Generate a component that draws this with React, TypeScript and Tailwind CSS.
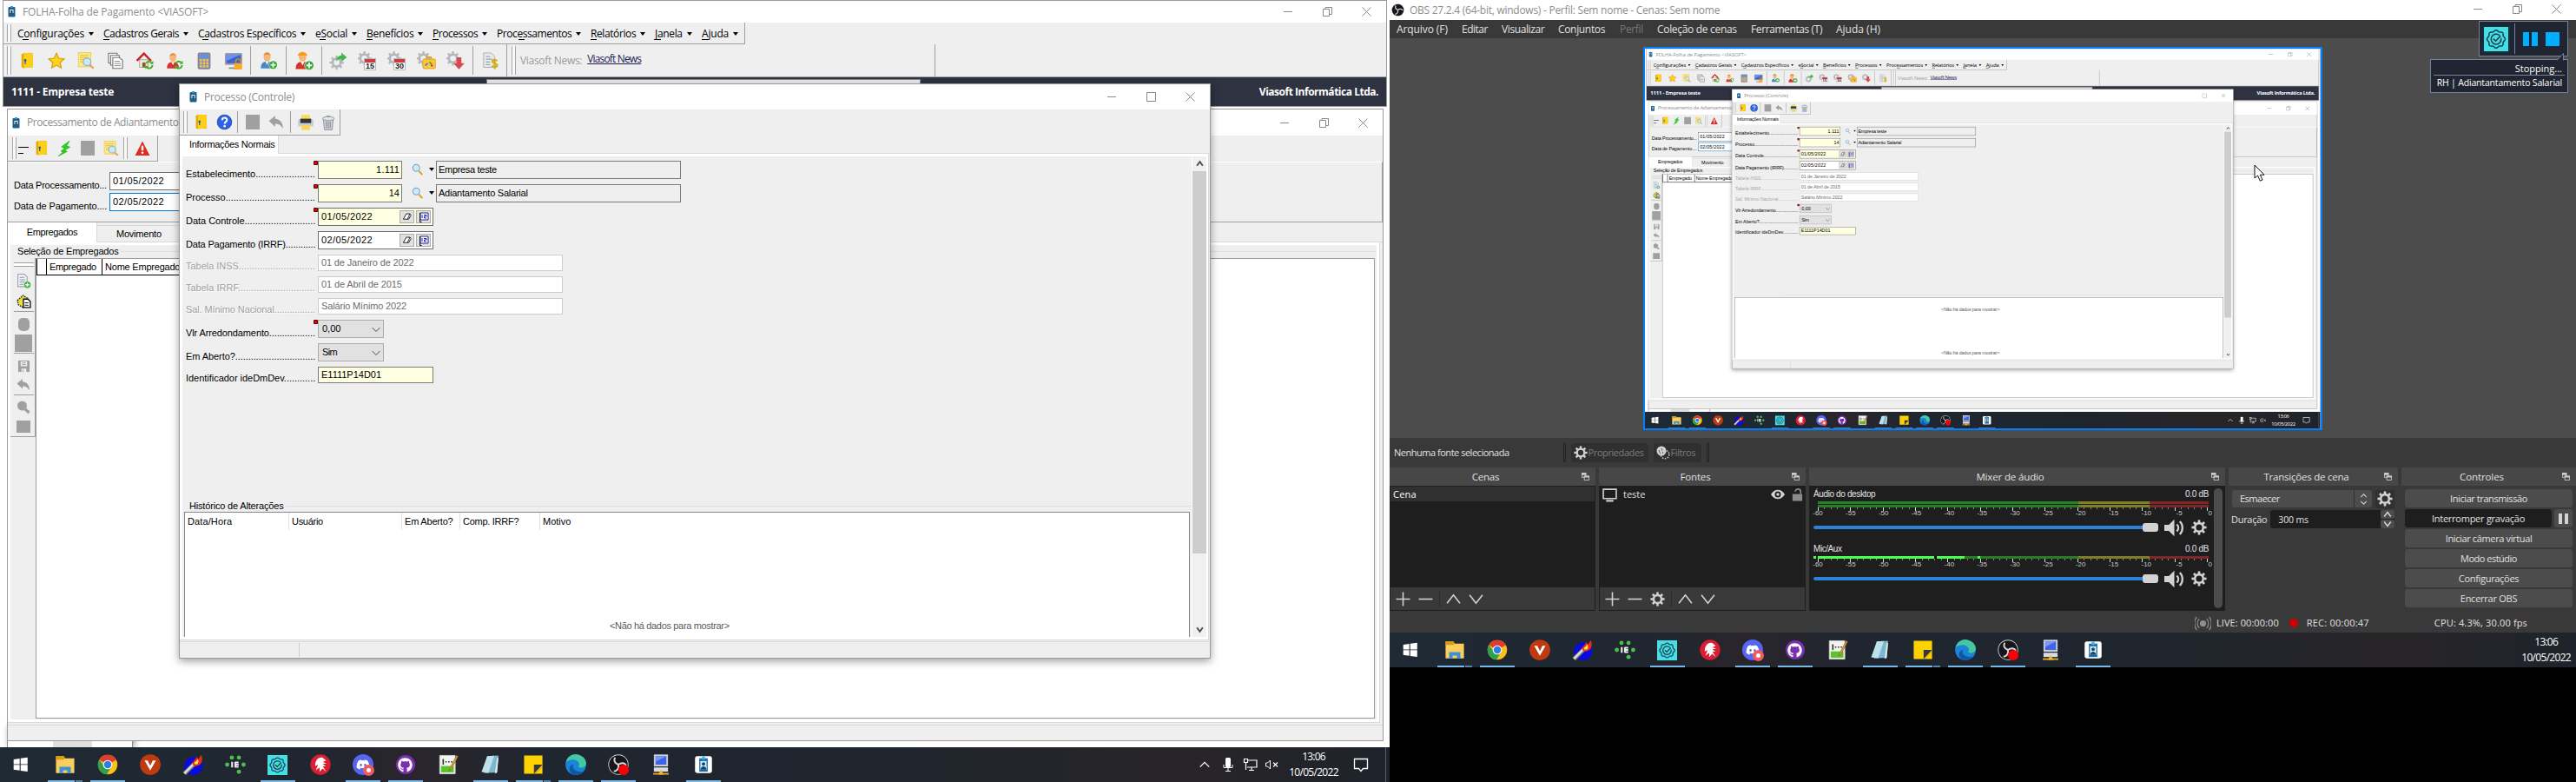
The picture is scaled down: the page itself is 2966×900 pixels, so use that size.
import React, { useLayoutEffect, useRef, useState } from "react";
import { FaDiscord, FaGithub } from "react-icons/fa";

type Kids = { children?: React.ReactNode };

/* Text whose tracking is tuned so that it spans exactly `w` pixels. */
function Fit({ w, children, className = "" }: { w: number; children: string; className?: string }) {
  const ref = useRef<HTMLSpanElement>(null);
  const [ls, setLs] = useState(0);
  useLayoutEffect(() => {
    const el = ref.current;
    if (el) setLs((w - el.offsetWidth) / children.length);
  }, []);
  return (
    <span ref={ref} className={`inline-block shrink-0 whitespace-pre ${className}`} style={{ letterSpacing: `${ls}px` }}>
      {children}
    </span>
  );
}

const MS = "font-['Liberation_Sans',Arial,sans-serif] text-[11px] leading-[13px]";
const UI = "font-['Open_Sans','Noto_Sans',sans-serif] text-[12px] leading-[14px]";

/* ---------- small drawings ---------- */
const Svg = ({ s = 16, v = 16, children, className = "" }: Kids & { s?: number; v?: number; className?: string }) => (
  <svg width={s} height={s} viewBox={`0 0 ${v} ${v}`} className={`block shrink-0 ${className}`} fill="none">{children}</svg>
);
const AppIcon = () => (
  <svg width="9" height="13" viewBox="0 0 9 13" className="block shrink-0">
    <rect x=".5" y="1" width="8" height="11.5" rx="1" fill="#1b5f8f" />
    <rect x="2.500" y="4" width="4" height="4" fill="#fff" />
    <rect x="3.500" y="5" width="2" height="3" fill="#16324a" />
    <rect x="3" y="0" width="3" height="2" fill="#2e9ad6" />
  </svg>
);
const Door = ({ s = 20 }) => (
  <Svg s={s}><path d="M3 2.2 5 1h8.500v13H5z" fill="#d9a300" /><path d="M5 1h8.500v12.500L5 15z" fill="#fdd017" /><path d="M3 2.200 5 1v14l-2-1.200z" fill="#e3ac05" /><circle cx="6.500" cy="7.500" r="1.100" fill="#2457b5" /><path d="M6.500 8v3" stroke="#2457b5" /></Svg>
);
const Star = () => (
  <Svg s={20}><path d="m8 1 2.100 4.600 5 .6-3.700 3.400 1 4.900L8 12.100l-4.400 2.400 1-4.900L.9 6.200l5-.6z" fill="#ffd21c" stroke="#d99a06" strokeWidth=".9" /></Svg>
);
const DocMag = ({ s = 20 }) => (
  <Svg s={s}><rect x="1" y=".5" width="11.500" height="13" fill="#fbe98d" stroke="#e8cc4c" strokeWidth=".7" /><path d="M2.500 3h8M2.500 5h8M2.500 7h5M2.500 9h4" stroke="#e2bf3f" strokeWidth=".8" /><circle cx="9" cy="9" r="3.500" fill="#cbe8f7" stroke="#8fb4c9" /><path d="m11.500 11.700 3.500 3.300" stroke="#e3a857" strokeWidth="1.800" /></Svg>
);
const Docs = () => (
  <Svg s={20}><g fill="#fff" stroke="#777" strokeWidth=".9"><path d="M1.500 1h8v9h-8z" /><path d="M3.500 3h8v9h-8z" /><path d="M5.500 5h6l3 2.500V15h-9z" /></g><path d="M7 8.500h5M7 10.500h6M7 12.500h6" stroke="#888" strokeWidth=".8" /></Svg>
);
const Sync = () => <g><path d="M9 10.500a3 3 0 0 1 5.200-.6M14.800 12a3 3 0 0 1-5.300 1.800" stroke="#45b02f" strokeWidth="1.600" /><path d="M15.600 7.800v3.200h-3zM8.300 15.800v-3.200h3z" fill="#45b02f" /></g>;
const House = () => (
  <Svg s={20}><path d="M3 7h8v7H3z" fill="#efe9df" stroke="#a89a86" strokeWidth=".7" /><path d="M.5 8 7 1.300 13.500 8" stroke="#c4242b" strokeWidth="2" /><path d="M5.500 9.500h3V14h-3z" fill="#8a5a2a" /><Sync /></Svg>
);
const Plus = () => <g><circle cx="11.800" cy="12" r="3.700" fill="#35a936" stroke="#fff" strokeWidth=".4" /><path d="M11.800 9.800v4.400M9.600 12H14" stroke="#fff" strokeWidth="1.300" /></g>;
const Person = ({ c, helmet, s = 20, children }: Kids & { c: string; helmet?: boolean; s?: number }) => (
  <Svg s={s}><path d="M1 15c0-4.500 2-6 5.500-6S12 10.500 12 15z" fill={c} /><path d="m5 9 1.500 3L8 9z" fill="#fff" /><ellipse cx="6.500" cy="5" rx="3.100" ry="4" fill="#f6b877" />{helmet ? <path d="M2.600 4.200C3 .5 10 .5 10.400 4.200z" fill="#f2a01c" /> : <path d="M3.400 4C4 0 9 0 9.600 4 8 2.500 5 2.500 3.400 4" fill="#e08a3c" />}{children}</Svg>
);
const Calc = () => (
  <Svg s={20}><rect x="2.500" y=".8" width="11" height="14.500" rx="1" fill="#8b94a3" stroke="#667" strokeWidth=".6" /><rect x="4" y="2.300" width="8" height="3" fill="#5b8fe8" /><g fill="#f8c25c">{[4, 7, 10].map(x => [6.500, 9.300, 12.100].map(y => <rect key={`${x}${y}`} x={x} y={y} width="2" height="1.900" />))}</g></Svg>
);
const Monitor = () => (
  <Svg s={22}><rect x=".7" y="1.500" width="14.500" height="10" rx="1" fill="#9a9fa8" /><rect x="2" y="2.800" width="12" height="7.200" fill="#3a62dd" /><path d="M2 2.800h12L2 8z" fill="#6e92f0" /><path d="M4 13.500h7v1.200H4z" fill="#888" /><rect x="8.500" y="10" width="6.500" height="5.300" fill="#f5ab25" /><path d="M9.800 10V8.500a2 2 0 0 1 4 0V10" stroke="#d28b10" strokeWidth="1.100" /></Svg>
);
const GearShape = ({ cx = 8, cy = 8, r = 4, c = "#d2d2d2", w = 2.400, t = 2 }) => (
  <g><circle cx={cx} cy={cy} r={r} stroke={c} strokeWidth={w} />{[0, 45, 90, 135, 180, 225, 270, 315].map(a => <rect key={a} x={cx - t / 2} y={cy - r - w / 2 - t * 0.9} width={t} height={t * 1.3} fill={c} transform={`rotate(${a} ${cx} ${cy})`} />)}</g>
);
const GearTool = ({ k }: { k: string }) => (
  <Svg s={22}>
    <GearShape cx={k === "arrow" ? 7 : 5.500} cy={k === "arrow" ? 9.500 : 6} r={3.400} c="#b3b7bd" w={2} t={1.700} />
    {k === "arrow" && <path d="M6.500 8.500C7 4.500 9.500 3.500 11 3.500V1l4.500 4L11 8.700V6.300c-2 0-3.500.7-4.500 2.200" fill="#43b649" />}
    {k === "bag" && <g><rect x="5" y="6.500" width="10.500" height="8" rx="1" fill="#fbc63a" stroke="#e09a1d" strokeWidth=".6" /><path d="M8 6.300V4.800h4v1.500" stroke="#e09a1d" /><path d="m7 12 2-2" stroke="#2f6fe0" strokeWidth="1.200" /><path d="m10.500 9 2 2" stroke="#39a83b" strokeWidth="1.200" /><circle cx="12.500" cy="12" r=".9" fill="#d33" /></g>}
    {k === "down" && <path d="M8.500 5h4v5h2.700l-4.700 5-4.700-5h2.700z" fill="#d9474f" />}
  </Svg>
);
const GearDay = ({ d }: { d: string }) => (
  <span className="relative block h-[22px] w-[22px]">
    <GearTool k="cal" />
    <span className="absolute left-[7px] top-[8px] flex h-[14px] w-[14px] flex-col border border-[#b9b9b9] bg-white">
      <span className="h-[4px] shrink-0 bg-[#cf3a3e]" />
      <span className="text-center font-['Liberation_Sans',sans-serif] text-[9px] font-bold leading-[9px] text-[#222]">{d}</span>
    </span>
  </span>
);
const Invoice = () => (
  <Svg s={20}><path d="M1.500.8h7l3 3V14h-10z" fill="#e8eaee" stroke="#a8adb5" strokeWidth=".8" /><path d="M3.500 4h4M3.500 6.500h6M3.500 9h4M3.500 11.500h4" stroke="#9aa" /><path d="M14 8.200c-1-1.400-4.600-1.300-4.500.6.100 1.700 4.700 1.300 4.600 3.300-.1 1.800-3.800 2-5 .4M11.700 6v9.500" stroke="#d2ac10" strokeWidth="1.600" /></Svg>
);
const Help = () => <Svg s={19}><circle cx="8" cy="8" r="7" fill="#2b62e6" stroke="#1b3fa5" strokeWidth=".7" /><path d="M5.700 6.200C5.800 3 10.600 3.200 10.400 6c-.1 1.700-2.300 1.700-2.300 3.600" stroke="#fff" strokeWidth="1.700" /><circle cx="8.100" cy="11.900" r="1.100" fill="#fff" /></Svg>;
const Undo = () => <Svg s={18}><path d="M.5 6.500 7 1v3.300c5 .4 8 4.200 8 10-2-3.200-4-4.800-8-4.900v3.100z" fill="#a0a0a0" /></Svg>;
const Printer = () => <Svg s={20}><path d="M4 1h8v5H4z" fill="#f6dc5b" /><rect x="1" y="5" width="14" height="6.500" rx="1" fill="#c9ccd0" /><rect x="3" y="4.500" width="10" height="4" fill="#33383d" /><path d="M4 10.500h8V15H4z" fill="#f3d85b" /></Svg>;
const Trash = () => <Svg s={18}><path d="M3 5h10l-1 10.500H4z" fill="#cfd3d8" stroke="#8b9096" strokeWidth=".8" /><ellipse cx="8" cy="4" rx="6" ry="2" fill="#e2e5e8" stroke="#8b9096" strokeWidth=".8" /><path d="M6 1.700h4M6 7v7M8 7v7M10 7v7" stroke="#8b9096" /></Svg>;
const Bolt = () => <Svg s={18}><path d="M13.500 0 5 6.200l3.300 1.500-3.800 3 2 .8L1.500 16l9.500-5-2.600-1.200L14 6.500 10.500 5.200z" fill="#28d11c" stroke="#159b10" strokeWidth=".4" /></Svg>;
const Alert = () => <Svg s={18}><path d="M8 .5 15.500 15H.5z" fill="#df2b20" /><path d="M8 5v5" stroke="#fff" strokeWidth="2.200" /><circle cx="8" cy="12.300" r="1.200" fill="#fff" /></Svg>;
const Mag = () => <Svg s={14}><circle cx="6" cy="6" r="4.500" fill="#cdeafb" stroke="#7fa9c9" strokeWidth="1.300" /><path d="m9.500 10 4.500 5" stroke="#e0a020" strokeWidth="2.300" /></Svg>;
const Tri = () => <svg width="6" height="4" viewBox="0 0 6 4" className="block shrink-0"><path d="M0 0h6L3 4z" fill="#000" /></svg>;
const Erase = () => <Svg s={11}><path d="m2 12 5-9h6l-4 9zM9 12h2l4-7-2-2" fill="#fff" stroke="#111" strokeWidth="1.300" /></Svg>;
const Cal = () => <Svg s={12} v={12}><path d="M2 1h9v8H2z" fill="#fff" stroke="#22228c" /><path d="M1.500 1v10.500h2" stroke="#111" /><path d="M4 3v4M6 3.500h3v1.500H6.500V7H9" stroke="#22c" /></Svg>;

const ObsGear = ({ s = 16 }) => <Svg s={s}><GearShape r={4.300} c="#d2d2d2" w={2.300} t={2.400} /></Svg>;
const ObsLogo = ({ s = 16 }) => (
  <Svg s={s}><circle cx="8" cy="8" r="7.800" fill="#cfcfcf" /><circle cx="8" cy="8" r="7.200" fill="#15151a" /><g stroke="#d8d8d8" strokeWidth="1.300"><path d="M8 8C4.800 7 4.300 4.500 5.500 2.500M8 8c2.600-2 5-1.300 6 .6M8 8c.5 3.200-1.200 5-3.500 5.200" /></g></Svg>
);
const Badge = ({ s = 22 }) => (
  <Svg s={s} v={24}><rect width="24" height="24" fill="#46dfe6" /><g stroke="#17404f" strokeWidth="1.300"><path d="M12 3.200c1.600 0 1.700 1.300 3 1.800s2.400-.4 3.400.6.200 2.200.7 3.400 1.900 1.400 1.900 3-1.400 1.700-1.900 3 .3 2.400-.7 3.400-2.100.1-3.400.6-1.400 1.800-3 1.800-1.700-1.300-3-1.800-2.400.4-3.400-.6-.2-2.200-.7-3.400S3 13.600 3 12s1.400-1.700 1.900-3-.3-2.400.7-3.400 2.100-.1 3.400-.6 1.400-1.800 3-1.800z" /><path d="M15.500 8.500a5 5 0 1 0 1.400 2.500M9.300 11.700l2.300 2.200 4.800-5" /></g></Svg>
);

/* ---------- taskbar ---------- */
const W = 26;
const taskIcons: { el: React.ReactNode; on?: boolean; multi?: boolean }[] = [
  { el: <Svg s={22}><path d="M.5 2.600 7 1.700v6H.5zM8 1.600 15.500.5v7.200H8zM.5 8.600H7v6l-6.500-.9zM8 8.600h7.500v7.100L8 14.700z" fill="#fff" transform="scale(.78) translate(2 2)" /></Svg> },
  { el: <Svg s={W}><path d="M1.500 2H7l1 1.500h6.500V14h-13z" fill="#f8cf5d" /><path d="M1.500 2H7l1 1.500-1 1H1.500z" fill="#d99a18" /><path d="M4 14V9.500h8V14h-2.500v-2h-3v2z" fill="#3a91d8" /></Svg>, on: true, multi: true },
  { el: <Svg s={W}><circle cx="8" cy="8" r="6.900" fill="#fbc117" /><path d="M8 8 2 4.600A6.900 6.900 0 0 1 14 4.600z" fill="#e23c2e" /><path d="M2 4.600A6.900 6.900 0 0 0 7.400 14.900L10 10.500 6 9.500z" fill="#2da14b" /><circle cx="8" cy="8" r="3.300" fill="#fff" /><circle cx="8" cy="8" r="2.600" fill="#2f7de1" /></Svg>, on: true },
  { el: <Svg s={W}><circle cx="8" cy="8" r="7.300" fill="#c03a10" /><path d="m4 5 4 7.200L12 5H9.800L8 8.700 6.200 5z" fill="#fff" /></Svg> },
  { el: <Svg s={W}><circle cx="8.500" cy="9" r="6.500" fill="#0a0adf" /><path d="m2 14.500 7-7" stroke="#777" strokeWidth="3" /><path d="m2 14.200 7-7" stroke="#ddd" strokeWidth="1.600" /><path d="M8 8c-1-2 2-3 2.500-5.500L12 4l2-3c1 3 1 6-2 7.500-2 .8-3 .7-4-.5" fill="#ef2a16" /><path d="M9 7.500c0-1.500 2-2 2.500-3.500.8 1.500.7 3-.5 3.800z" fill="#ffe73a" /></Svg> },
  { el: <Svg s={W}><g fill="#49c24b"><circle cx="5.500" cy="3" r="1.500" /><circle cx="10.500" cy="3" r="1.500" /><circle cx="2.200" cy="8" r="1.500" /><circle cx="13.800" cy="8" r="1.500" /><circle cx="10.500" cy="13" r="1.500" /></g><path d="M5.700 6v4M8 6v4M8 6.500h2.300M8 8h2.300M8 9.500h2.300" stroke="#e8e8e8" strokeWidth="1.300" /></Svg> },
  { el: <Badge s={23} />, on: true },
  { el: <Svg s={W}><circle cx="8" cy="8" r="7.200" fill="#d81f33" /><path d="M9.500 3C6 2.500 4 5.500 4.300 9l2-1-1.600 4 2.800-2-.2 3 2.200-2.300L12 13 9.600 9l2.300.3L9.500 7.500l2.800-.3-2.600-1L12 5z" fill="#fff" /></Svg> },
  { el: <span className="relative flex h-[24px] w-[24px] items-center justify-center rounded-full bg-[#5865f2] text-[16px] text-white"><FaDiscord /><span className="absolute -right-[1px] -bottom-[1px] flex h-[13px] w-[13px] items-center justify-center rounded-full bg-[#ef5a5f]"><span className="h-[5px] w-[5px] rounded-full bg-white" /></span></span>, on: true },
  { el: <span className="flex h-[22px] w-[22px] items-center justify-center rounded-full bg-[#7a2fb0] text-[17px] text-white"><FaGithub /></span>, on: true },
  { el: <Svg s={W}><path d="M2 1.500h11v13H2z" fill="#f4f4ee" stroke="#ccc" strokeWidth=".5" /><path d="M3 9h9v4.500H3z" fill="#57c42e" /><path d="M4.500 4v4M6 6h1M8 6h1M10 6h1" stroke="#333" /><path d="m9 11 5-9.500 1 .6L10 11.500l-1.300.8z" fill="#e3a33a" stroke="#7a5a20" strokeWidth=".4" /></Svg> },
  { el: <Svg s={W}><path d="m5.500 2 8-.5-1 12-9 .5z" fill="#79b8cf" /><path d="m5.500 2 5-.3-4 12.100-5-.6z" fill="#bfe1ec" /><path d="m12.500 3 1 .2-1 10.500-1.500.6z" fill="#e8e8e8" /></Svg>, on: true },
  { el: <Svg s={W}><path d="M1.500 1.500h13V9l-5 5.500h-8z" fill="#fed100" /><path d="M8.500 14.500V8h6z" fill="#343741" /><path d="M9.500 14.500h5V9z" fill="#fed100" /></Svg>, on: true, multi: true },
  { el: <Svg s={W}><circle cx="8" cy="8" r="7.300" fill="#1a84d6" /><path d="M1 6.500C2 2 6-.2 10 1c4 1.100 5.800 4.500 5.200 7-.6 2.200-4 2.700-5.300 1.500C11.500 7 9 4.500 6 4.500c-2.300 0-4 .8-5 2" fill="#43c8a0" /><path d="M6.200 8C5 11 8 13.800 13.300 12.800A7.300 7.300 0 0 1 6 15C2.500 13 2.700 8.500 6.200 8" fill="#0f57a5" /></Svg>, on: true },
  { el: <span className="relative block"><ObsLogo s={24} /><span className="absolute right-0 bottom-0 h-[12px] w-[12px] rounded-full bg-[#fb0007]" /></span>, on: true },
  { el: <Svg s={W}><rect x="3" y=".8" width="10" height="8.500" fill="#c9cdd6" /><rect x="4.200" y="2" width="7.600" height="6" fill="#3f63e8" /><path d="M4.200 2h7.600l-7.600 4z" fill="#7b96f5" /><rect x="3" y="10" width="10" height="3" fill="#d9dbe0" /><path d="M2.500 14.500h11" stroke="#e3a62a" strokeWidth="1.200" /><path d="m8 11.500 2 3.500H6z" fill="#f5b52b" /></Svg> },
  { el: <Svg s={W}><rect x="2" y="2" width="12" height="12" rx="1.500" fill="#fff" /><rect x="5" y="3.500" width="6" height="9.500" fill="#1b6ea8" /><rect x="7" y="2.200" width="2" height="2.300" fill="#3eb1e8" /><rect x="5.800" y="5.500" width="4.400" height="6" fill="#d8eef8" /><circle cx="8" cy="7.500" r="1.200" fill="#14486e" /><path d="M6 11.500c0-3 4-3 4 0z" fill="#14486e" /></Svg>, on: true },
];

const Clock = () => (
  <div className={`flex flex-col items-center text-white ${UI}`}>
    <span className="flex h-[18px] items-center"><Fit w={27}>13:06</Fit></span>
    <span className="flex h-[18px] items-center"><Fit w={57}>10/05/2022</Fit></span>
  </div>
);

function Taskbar({ tray }: { tray: boolean }) {
  return (
    <div className="flex h-[40px] shrink-0 items-stretch bg-[linear-gradient(90deg,#1f2a34_0%,#20262f_22%,#2a252c_30%,#1f2630_40%,#1f252d_65%,#282528_85%,#1e232b_100%)]">
      {taskIcons.map((t, i) => (
        <div key={i} className={i === 0 ? "flex w-[50px] flex-col items-center pr-[2px]" : "flex w-[49px] flex-col items-center"}>
          <div className="flex h-[38px] items-center pt-[2px]">{t.el}</div>
          {t.on && <div className="flex h-[2px] w-[40px] bg-[#76b9ed]">{t.multi && <div className="ml-[31px] w-[9px] border-l border-[#223] bg-[#5386ad]" />}</div>}
        </div>
      ))}
      <div className="flex-1" />
      {tray ? (
        <>
          <div className="flex items-center gap-[8px] pr-[12px]">
            <Svg s={14}><path d="m2 11 6-6 6 6" stroke="#fff" strokeWidth="1.500" /></Svg>
            <svg width="18" height="18" viewBox="0 0 18 18" className="ml-[3px]" fill="none"><rect x="6" y="1" width="6" height="11" rx="1.500" fill="#fff" /><path d="M4 9v3.500h10V9M9 13v3.500M6 16.500h6" stroke="#fff" /></svg>
            <Svg s={18} v={18}><path d="M5 4h11v8H5M1.500 2.500h4v4h-4zM3.500 7v8M10 12v3M7 15.500h6" stroke="#fff" strokeWidth="1.200" /></Svg>
            <svg width="15" height="16" viewBox="0 0 15 16" fill="none"><path d="M.5 6v4h2l3 3V3l-3 3z" stroke="#fff" /><path d="m9 5.500 5 5M14 5.500l-5 5" stroke="#fff" strokeWidth="1.200" /></svg>
          </div>
          <div className="flex w-[57px] justify-center pt-[2px]"><Clock /></div>
          <div className="flex w-[54px] items-center pl-[17px]"><Svg s={18} v={18}><path d="M1.500 2.500h15v11h-5L9 16.500l-2.500-3h-5z" stroke="#fff" strokeWidth="1.300" /></Svg></div>
          <div className="w-[5px] border-l border-[#5c6068]" />
        </>
      ) : (
        <div className="pr-[6px] pt-[2px]"><Clock /></div>
      )}
    </div>
  );
}

/* ---------- classic desktop windows ---------- */
const Controls = ({ max, noMin }: { max?: boolean; noMin?: boolean }) => (
  <div className="flex items-center">
    <div className="flex w-[45px] justify-center">{!noMin && <span className="h-px w-[10px] bg-[#8a8a8a]" />}</div>
    <div className="flex w-[46px] justify-center">
      <Svg s={11} v={11}>{max ? <path d="M.5.5h10v10H.5z" stroke="#888" /> : <path d="M.5 2.500h7v8h-7zM3 2V.5h7.500v8H8" stroke="#888" />}</Svg>
    </div>
    <div className="flex w-[45px] justify-center"><Svg s={11} v={11}><path d="m.5.5 10 10M10.500.5l-10 10" stroke="#888" /></Svg></div>
  </div>
);
const Grip = ({ className = "" }) => <div className={`w-[5px] shrink-0 border-x border-[#a6a6a6] bg-white/60 ${className}`} />;
const Sep = ({ className = "w-[5px]" }) => <div className={`flex shrink-0 justify-center ${className}`}><span className="w-px bg-[#a0a0a0]" /></div>;
const Slot = ({ children, className = "w-[34px]" }: Kids & { className?: string }) => <div className={`flex shrink-0 items-center justify-center ${className}`}>{children}</div>;

const menus: [string, number, number, number][] = [
  ["Configurações", 1, 77, 99], ["Cadastros Gerais", 0, 87, 109], ["Cadastros Específicos", 1, 113, 135], ["eSocial", 1, 37, 59],
  ["Benefícios", 0, 54, 76], ["Processos", 0, 52, 74], ["Processamentos", 4, 86, 108], ["Relatórios", 0, 52, 74], ["Janela", 0, 32, 54], ["Ajuda", 0, 31, 49],
];
const Letters = ({ text, at, w }: { text: string; at: number; w: number }) => (
  <span className="relative shrink-0">
    <Fit w={w}>{text}</Fit>
    <span className="absolute bottom-0 h-px w-[7px] bg-black" style={{ left: (at * w) / text.length }} />
  </span>
);

const Dot = () => <span className="absolute -top-px -left-[6px] h-[5px] w-[5px] rounded-[1px] border border-black/60 bg-[#e80000]" />;
const Btn = ({ children }: Kids) => <span className="flex h-[15px] w-[17px] items-center justify-center border border-[#adadad] bg-[#e1e1e1]">{children}</span>;
const DateBox = ({ v, w, bg, dot }: { v: string; w: number; bg: string; dot?: boolean }) => (
  <div className={`relative flex h-[21px] w-[133px] items-center justify-between border border-[#6f6f6f] pr-[2px] pl-[3px] ${bg}`}>
    {dot && <Dot />}
    <span className="pb-px"><Fit w={w}>{v}</Fit></span>
    <span className="flex gap-[2px]"><Btn><Erase /></Btn><Btn><Cal /></Btn></span>
  </div>
);
function Row({ label, dots, off, short, children }: Kids & { label: string; dots: number; off?: boolean; short?: boolean }) {
  return (
    <div className={`flex items-start ${short ? "h-[25px]" : "h-[27px]"}`}>
      <div className={`flex h-[21px] w-[152px] shrink-0 items-center ${short ? "mt-[3px]" : "mt-[5px]"} ${off ? "text-[#a0a0a0] [text-shadow:1px_1px_0_#fff]" : "text-black"}`}>
        <Fit w={149}>{label + ".".repeat(dots)}</Fit>
      </div>
      {children}
    </div>
  );
}
const Lookup = ({ v, w, name, nw }: { v: string; w: number; name: string; nw: number }) => (
  <>
    <div className="relative flex h-[21px] w-[97px] items-center justify-end border border-[#7a7a7a] bg-[#ffffe1] pr-[2px]"><Dot /><Fit w={w}>{v}</Fit></div>
    <div className="flex h-[20px] w-[39px] items-center gap-[6px] pl-[11px]"><Mag /><Tri /></div>
    <div className="flex h-[21px] w-[282px] items-center border border-[#7a7a7a] pl-[2px]"><Fit w={nw}>{name}</Fit></div>
  </>
);
const Off = ({ v, w }: { v: string; w: number }) => <div className="flex h-[19px] w-[282px] items-center border border-[#ccc] bg-white pl-[3px] text-[#6d6d6d]"><Fit w={w}>{v}</Fit></div>;
const Combo = ({ v, w, dot }: { v: string; w: number; dot?: boolean }) => (
  <div className="relative flex h-[21px] w-[76px] items-center justify-between border border-[#adadad] bg-[#e1e1e1] pr-[3px] pl-[4px]">{dot && <Dot />}<Fit w={w}>{v}</Fit><Svg s={10}><path d="m1 5 7 7 7-7" stroke="#444" strokeWidth="1.600" /></Svg></div>
);
const Arrow = ({ up }: { up?: boolean }) => <Svg s={9}><path d={up ? "m2 12 6-8 6 8" : "m2 4 6 8 6-8"} stroke="#505050" strokeWidth="3.500" /></Svg>;

function ProcessDialog({ mini }: { mini?: boolean }) {
  return (
    <div className={`absolute top-[96px] left-[206px] flex h-[662px] w-[1188px] flex-col border border-[#9b9b9b] bg-[#efefef] shadow-[0_3px_9px_rgba(0,0,0,0.38)] ${MS}`}>
      <div className="flex h-[29px] items-stretch justify-between bg-white">
        <div className={`flex items-center pl-[11px] text-[#8d8d8d] ${UI}`}><AppIcon /><Fit w={104} className="ml-[8px]">Processo (Controle)</Fit></div>
        <Controls max noMin={mini} />
      </div>
      <div className="flex h-[30px]">
        <div className="flex w-[185px] border-r border-b border-[#a0a0a0] pl-[4px]">
          <Grip className="my-[2px]" />
          <Slot className="w-[31px]"><Door s={19} /></Slot><Slot className="w-[22px]"><Help /></Slot><Sep className="my-[2px] w-[8px]" />
          <Slot className="w-[28px]"><span className="h-[17px] w-[16px] bg-[#a0a0a0]" /></Slot><Slot className="w-[26px]"><Undo /></Slot><Sep className="my-[2px] w-[6px]" />
          <Slot className="w-[30px]"><Printer /></Slot><Slot className="w-[22px]"><Trash /></Slot>
        </div>
      </div>
      <div className="flex h-[21px]">
        <div className="flex w-[114px] items-center border-r border-[#d9d9d9] bg-white pl-[11px]"><Fit w={99}>Informações Normais</Fit></div>
        <div className="flex-1 border-b border-[#dadada]" />
      </div>
      <div className="mr-px flex h-[560px] border-r border-b border-[#dadada] bg-white py-[3px] pr-[2px] pl-[3px]">
        <div className="flex flex-1 flex-col bg-[#efefef]">
          <div className="flex h-[396px] flex-col pt-[5px] pl-[4px]">
            <Row label="Estabelecimento" dots={23}><Lookup v="1.111" w={27} name="Empresa teste" nw={67} /></Row>
            <Row label="Processo" dots={34}><Lookup v="14" w={12} name="Adiantamento Salarial" nw={103} /></Row>
            <Row label="Data Controle" dots={27}><DateBox v="01/05/2022" w={59} bg="bg-[#ffffe1]" dot /></Row>
            <Row label="Data Pagamento (IRRF)" dots={12}><DateBox v="02/05/2022" w={59} bg="bg-white" /></Row>
            <Row label="Tabela INSS" dots={29} off short><Off v="01 de Janeiro de 2022" w={106} /></Row>
            <Row label="Tabela IRRF" dots={29} off short><Off v="01 de Abril de 2015" w={93} /></Row>
            <Row label="Sal. Mínimo Nacional" dots={16} off short><Off v="Salário Mínimo 2022" w={98} /></Row>
            <Row label="Vlr Arredondamento" dots={18}><Combo v="0,00" w={21} dot /></Row>
            <Row label="Em Aberto?" dots={31}><Combo v="Sim" w={17} /></Row>
            <Row label="Identificador ideDmDev" dots={12} short><div className="flex h-[19px] w-[133px] items-center border border-[#7a7a7a] bg-[#ffffe1] pl-[3px]"><Fit w={69}>E1111P14D01</Fit></div></Row>
          </div>
          <div className="flex h-[13px] items-center gap-[2px] pl-[8px]">
            {mini ? <span className="w-[109px]" /> : <Fit w={109}>Histórico de Alterações</Fit>}
            <span className="h-px flex-1 bg-[#dcdcdc]" />
          </div>
          <div className="mx-[2px] flex flex-1 flex-col border-x border-t border-[#828790] bg-white">
            <div className="flex h-[20px]">
              {!mini && <>
                <span className="flex w-[120px] items-center border-r border-[#e0e0e0] pl-[3px]"><Fit w={51}>Data/Hora</Fit></span>
                <span className="flex w-[130px] items-center border-r border-[#e0e0e0] pl-[3px]"><Fit w={36}>Usuário</Fit></span>
                <span className="flex w-[67px] items-center border-r border-[#e0e0e0] pl-[3px]"><Fit w={55}>Em Aberto?</Fit></span>
                <span className="flex w-[92px] items-center border-r border-[#e0e0e0] pl-[3px]"><Fit w={64}>Comp. IRRF?</Fit></span>
                <span className="flex items-center pl-[3px]"><Fit w={32}>Motivo</Fit></span>
              </>}
            </div>
            {mini && <div className="pl-[489px] pt-[2px] text-[#5a5a5a]"><Fit w={138}>{"<Não há dados para mostrar>"}</Fit></div>}
            <div className="mt-auto pb-[6px] pl-[489px] text-[#5a5a5a]"><Fit w={138}>{"<Não há dados para mostrar>"}</Fit></div>
          </div>
        </div>
        <div className="flex w-[17px] flex-col items-center justify-between border-l border-white bg-[#f0f0f0]">
          <div className="flex h-[17px] items-center"><Arrow up /></div>
          <div className="h-[440px] w-full bg-[#cdcdcd]" />
          <div className="flex-1" />
          <div className="flex h-[17px] items-center"><Arrow /></div>
        </div>
      </div>
      <div className="mt-px flex flex-1 border-t border-[#dadada]"><div className="my-px w-[138px] border-r border-[#d0d0d0]" /></div>
    </div>
  );
}

const SideLine = () => <div className="h-px w-[23px] shrink-0 bg-[#a0a0a0]" />;
const SideIcon = ({ children, className = "" }: Kids & { className?: string }) => <div className={`flex h-[22px] shrink-0 items-center ${className}`}>{children}</div>;

function AdvanceWindow() {
  return (
    <div className={`absolute top-[125px] left-[8px] flex h-[728px] w-[1585px] flex-col border border-[#9b9b9b] bg-[#efefef] ${MS}`}>
      <div className="flex h-[30px] items-stretch justify-between bg-white">
        <div className={`flex items-center pl-[5px] text-[#8d8d8d] ${UI}`}><AppIcon /><Fit w={175} className="ml-[8px]">Processamento de Adiantamento</Fit></div>
        <Controls />
      </div>
      <div className="flex h-[30px]">
        <div className="flex w-[173px] border-r border-b border-[#a0a0a0] pl-[5px]">
          <Grip className="my-[2px]" />
          <div className="flex w-[16px] flex-col justify-center gap-[6px] pt-[4px] pl-[2px]"><span className="h-px w-[12px] bg-black" /><span className="h-px w-[6px] bg-black" /></div>
          <Slot className="w-[25px]"><Door s={19} /></Slot><Slot className="w-[27px]"><Bolt /></Slot>
          <Slot className="w-[27px]"><span className="h-[17px] w-[16px] bg-[#a0a0a0]" /></Slot><Slot className="w-[28px]"><DocMag s={18} /></Slot>
          <Grip className="my-[2px]" /><Slot className="w-[33px]"><Alert /></Slot>
        </div>
      </div>
      <div className="flex h-[70px] flex-col border-t border-r border-b border-t-white border-r-[#a0a0a0] border-b-[#a0a0a0] pt-[11px] pl-[7px]">
        <div className="flex h-[24px] items-start">
          <div className="flex h-[21px] w-[110px] items-center pt-[9px]"><Fit w={107}>Data Processamento...</Fit></div>
          <DateBox v="01/05/2022" w={59} bg="bg-white" />
        </div>
        <div className="flex h-[24px] items-start">
          <div className="flex h-[21px] w-[110px] items-center pt-[9px]"><Fit w={107}>Data de Pagamento....</Fit></div>
          <DateBox v="02/05/2022" w={59} bg="bg-white !border-[#0078d7]" />
        </div>
      </div>
      <div className="flex h-[23px] items-end">
        <div className="flex h-[23px] w-[103px] items-center justify-center border-r border-[#d9d9d9] bg-white"><Fit w={58}>Empregados</Fit></div>
        <div className="flex h-[20px] w-[104px] items-center border-t border-b border-[#d9d9d9] pl-[22px]"><Fit w={52}>Movimento</Fit></div>
        <div className="flex-1 border-b border-[#d9d9d9]" />
      </div>
      <div className="mr-[3px] flex h-[553px] flex-col border-r border-b border-[#dadada] bg-white p-[3px]">
        <div className="flex flex-1 flex-col bg-[#efefef] pb-px">
          <div className="flex h-[15px] items-center gap-[2px] pl-[8px]"><Fit w={116}>Seleção de Empregados</Fit><span className="h-px flex-1 bg-[#dcdcdc]" /></div>
          <div className="flex flex-1">
            <div className="flex h-[206px] w-[29px] flex-col items-center border-r border-b border-[#a0a0a0] pl-[2px]">
              <div className="my-[5px] h-[5px] w-[23px] shrink-0 border-y border-[#a0a0a0] bg-white" />
              <SideIcon className="mb-[2px]"><Svg s={17}><path d="M1.500.5h7l3 3V14h-10z" fill="#eef0f4" stroke="#9aa2ad" /><path d="M3.500 4h5M3.500 6.500h6M3.500 9h5M3.500 11.500h4" stroke="#8e97a5" /><Plus /></Svg></SideIcon>
              <SideIcon><Svg s={17}><path d="M1 6.500 7 1l5 3-5 10-5-3z" fill="#e8df3e" stroke="#111" strokeWidth="1.200" strokeDasharray="1.500 1" /><path d="M7.500 5h5l2.500 2.500V14H7.500z" fill="#fff" stroke="#111" strokeWidth="1.300" /><path d="M9 9h4M9 11.500h4" stroke="#111" /></Svg></SideIcon>
              <SideLine />
              <SideIcon className="mt-[3px]"><span className="h-[15px] w-[13px] rounded-[5px] bg-[#a0a0a0]" /></SideIcon>
              <SideIcon><span className="h-[20px] w-[20px] bg-[#a0a0a0]" /></SideIcon>
              <SideLine />
              <SideIcon className="mt-[3px]"><Svg s={15}><path d="M1 1h14v14H1z" fill="#a0a0a0" /><path d="M4 2h8v6H4zM5 11h6v4H5z" fill="#efefef" /><path d="M5.500 4h5M5.500 6h5M7 12v3" stroke="#a0a0a0" /></Svg></SideIcon>
              <SideIcon><Svg s={16}><path d="M.5 6.500 7 1v3.300c5 .4 8 4.200 8 10-2-3.200-4-4.800-8-4.900v3.100z" fill="#a0a0a0" /></Svg></SideIcon>
              <SideLine />
              <SideIcon className="mt-[3px]"><Svg s={16}><circle cx="6.500" cy="6" r="5.500" fill="#a0a0a0" /><path d="m9 9 5.500 5" stroke="#a0a0a0" strokeWidth="3.500" /></Svg></SideIcon>
              <SideIcon><span className="h-[14px] w-[16px] bg-[#a0a0a0]" /></SideIcon>
            </div>
            <div className="mr-[2px] flex-1 border border-[#9b9b9b] bg-white">
              <div className="flex h-[19px]">
                <div className="flex border-b border-black">
                  <span className="w-[12px] border-x border-black" />
                  <span className="flex w-[64px] items-center border-r border-black pl-[3px]"><Fit w={54}>Empregado</Fit></span>
                  <span className="flex w-[90px] items-center pl-[3px]"><Fit w={86}>Nome Empregado</Fit></span>
                </div>
              </div>
            </div>
          </div>
        </div>
      </div>
      <div className="mt-[2px] flex-1 border-t border-[#dadada]" />
    </div>
  );
}

function Desktop({ mini }: { mini?: boolean }) {
  return (
    <div className="relative flex h-[900px] w-[1600px] shrink-0 flex-col overflow-hidden bg-white text-black">
      <div className="mx-[3px] flex h-[123px] flex-col border border-[#9b9b9b] bg-[#efefef]">
        <div className="flex h-[25px] shrink-0 items-stretch justify-between bg-white">
          <div className={`flex items-center pl-[5px] text-[#8d8d8d] ${UI}`}><AppIcon /><Fit w={214} className="ml-[8px]">{"FOLHA-Folha de Pagamento <VIASOFT>"}</Fit></div>
          <Controls />
        </div>
        <div className={`flex h-[25px] w-[854px] shrink-0 border-r border-b border-[#a0a0a0] pl-[4px] text-black ${UI}`}>
          <Grip className="my-[2px]" />
          <div className="flex items-center pt-px pl-[7px]">
            {menus.map(([t, at, w, slot]) => (
              <div key={t} className="flex items-center gap-[5px]" style={{ width: slot }}><Letters text={t} at={at} w={w} /><Tri /></div>
            ))}
          </div>
        </div>
        <div className="flex h-[38px] shrink-0 border-b border-[#a0a0a0]">
          <div className="flex w-[580px] border-r border-[#a0a0a0] pl-[4px]">
            <Grip className="my-[2px]" />
            <span className="w-px shrink-0" />
            <Slot><Door /></Slot><Slot><Star /></Slot><Slot><DocMag /></Slot><Slot><Docs /></Slot><Slot><House /></Slot><Slot><Person c="#d8322c"><Sync /></Person></Slot><Slot><Calc /></Slot><Slot><Monitor /></Slot>
            <Sep className="my-[2px] w-[5px]" /><Slot className="w-[36px]"><Person c="#4587cd" s={21}><Plus /></Person></Slot>
            <Sep className="my-[2px] w-[5px]" /><Slot className="w-[36px]"><Person c="#d8322c" helmet s={23}><Plus /></Person></Slot>
            <Sep className="my-[2px] w-[4px]" /><Slot><GearTool k="arrow" /></Slot><Slot><GearDay d="15" /></Slot><Slot><GearDay d="30" /></Slot><Slot><GearTool k="bag" /></Slot><Slot><GearTool k="down" /></Slot>
            <Sep className="my-[2px] w-[5px]" /><Slot className="w-[35px]"><Invoice /></Slot>
          </div>
          <div className={`flex w-[493px] border-r border-[#a0a0a0] pl-[5px] ${UI}`}>
            <Grip className="my-[2px]" />
            <div className="flex items-center pl-[5px]"><Fit w={71} className="text-[#9a9a9a]">Viasoft News:</Fit><Fit w={62} className="mb-[3px] ml-[6px] text-[#1b1c52] underline">Viasoft News</Fit></div>
          </div>
        </div>
        <div className={`flex flex-1 items-center justify-between bg-[#2e3241] pr-[9px] pl-[9px] font-bold text-white ${UI}`}>
          <Fit w={118}>1111 - Empresa teste</Fit><Fit w={137}>Viasoft Informática Ltda.</Fit>
        </div>
      </div>
      <div className="absolute top-[91px] left-[560px] h-[8px] w-[500px] border border-[#858585] bg-[#ececec]" />
      <div className="absolute top-[835px] left-[8px] h-[25px] w-[145px] border-x border-[#8a8a8a] bg-white shadow-[2px_0_7px_rgba(0,0,0,0.4)]"><div className="ml-[52px] h-[25px] w-[45px] bg-[#e0e0e0]" /></div>
      <AdvanceWindow />
      <ProcessDialog mini={mini} />
      <div className="flex-1" />
      <div className="relative"><Taskbar tray /></div>
    </div>
  );
}

/* ---------- OBS ---------- */
const obsMenus: [string, number, number][] = [["Arquivo (F)", 59, 75], ["Editar", 30, 46], ["Visualizar", 49, 65], ["Conjuntos", 54, 71], ["Perfil", 27, 43], ["Coleção de cenas", 92, 108], ["Ferramentas (T)", 82, 98], ["Ajuda (H)", 51, 51]];
const Pop = () => <Svg s={9} v={10}><path d="M0 0h6v3H0zM3 4h7v2H3z" fill="#ccc" /><path d="M.5 0v6H3M5.500 1v3M3.500 4.500h6v5h-6z" stroke="#ccc" /></Svg>;
const Dock = ({ title, w, className, children }: Kids & { title: string; w: number; className: string }) => (
  <div className={`flex h-[165px] shrink-0 flex-col ${className}`}>
    <div className="flex h-[21px] shrink-0 items-center bg-[#474747] pr-[7px] text-[11.5px]"><span className="flex flex-1 justify-center"><Fit w={w}>{title}</Fit></span><Pop /></div>
    {children}
  </div>
);
const G = ({ d }: { d: string }) => <Svg s={17}><path d={d} stroke="#d2d2d2" strokeWidth="1.500" /></Svg>;
const DockTools = ({ gear }: { gear?: boolean }) => (
  <div className="mx-px flex h-[27px] items-center border-t border-[#1f1e1f] bg-[#3a393a] pl-[6px]">
    <G d="M8 .5v15M.5 8h15" /><span className="w-[9px]" /><G d="M.5 8h15" />
    {gear && <><span className="w-[9px]" /><ObsGear s={17} /></>}
    <span className="mx-[7px] h-[19px] w-px bg-[#2c2c2c]" />
    <G d="m1 12.500 7-9 7 9" /><span className="w-[9px]" /><G d="m1 3.500 7 9 7-9" />
  </div>
);
const Scale = () => (
  <div className="ml-[5px] w-[450px]">
    <div className="flex h-[4px] justify-between">
      {Array.from({ length: 61 }, (_, i) => <span key={i} className={i % 5 ? "h-[2px] w-px bg-[#888]" : "h-[4px] w-px bg-[#ddd]"} />)}
    </div>
    <div className="-mx-[8px] -mt-[2px] flex justify-between pr-[4px] font-['Liberation_Sans',sans-serif] text-[8px] leading-[10px] text-[#c8c8c8]">
      {[-60, -55, -50, -45, -40, -35, -30, -25, -20, -15, -10, -5, 0].map(n => <span key={n} className={n === 0 ? "w-[8px] text-right" : "w-[16px] text-center"}>{n}</span>)}
    </div>
  </div>
);
const Speaker = () => <Svg s={23} v={20}><path d="M0 7h4.500L10 1.500v17L4.500 13H0z" fill="#d2d2d2" /><path d="M12.500 6.500c2 2 2 5 0 7M15.500 3.500c3.500 3.500 3.500 9.500 0 13" stroke="#d2d2d2" strokeWidth="2" /></Svg>;
const Bar = ({ live }: { live?: boolean }) => (
  <div className={`flex h-[3px] ${live ? "" : "ml-[5px]"}`}>
    {live ? <><span className="w-[3px] bg-[#4cff4c]" /><span className="w-[2px]" /><span className="w-[134px] bg-[#4cff4c]" /><span className="w-[3px] bg-black" /><span className="w-[32px] bg-[#4cff4c]" /><span className="w-[15px] bg-[#267f26]" /><span className="w-[3px] bg-[#4cff4c]" /><span className="w-[113px] bg-[#267f26]" /></> : <span className="w-[300px] bg-[#267f26]" />}
    <span className="w-[82px] bg-[#7f7f26]" /><span className="w-[68px] bg-[#7f2626]" />
  </div>
);
const Channel = ({ name, w, live }: { name: string; w: number; live?: boolean }) => (
  <div className={`flex flex-col pl-[5px] ${live ? "" : "h-[63px]"}`}>
    <div className="flex h-[18px] w-[455px] items-center justify-between pt-[2px] font-['Liberation_Sans',sans-serif] text-[10px]"><Fit w={w}>{name}</Fit><Fit w={27}>0.0 dB</Fit></div>
    {live ? <Bar live /> : <div className="flex flex-col gap-px"><Bar /><Bar /></div>}
    <Scale />
    <div className="mt-px flex h-[20px] shrink-0 items-center">
      <span className="h-[4px] w-[379px] rounded-l bg-[#2a82da]" /><span className="h-[10px] w-[18px] rounded-[3px] bg-[#d2d2d2]" /><span className="ml-[7px]"><Speaker /></span><span className="ml-[8px]"><ObsGear s={18} /></span>
    </div>
  </div>
);
const CBtn = ({ t, w }: { t: string; w: number }) => <div className="flex h-[21px] items-center justify-center rounded-[3px] bg-[#4c4c4c]"><Fit w={w}>{t}</Fit></div>;

function Obs() {
  return (
    <div className={`relative flex h-[768px] w-[1366px] shrink-0 flex-col overflow-hidden bg-[#3a393a] text-[#e1e0e1] ${UI}`}>
      <div className="flex h-[23px] shrink-0 items-center bg-white text-[#8d8d8d]">
        <span className="ml-[2px]"><ObsLogo s={15} /></span><Fit w={357} className="ml-[6px]">OBS 27.2.4 (64-bit, windows) - Perfil: Sem nome - Cenas: Sem nome</Fit>
        <span className="flex-1" /><div className="pb-[2px]"><Controls /></div>
      </div>
      <div className="flex h-[21px] shrink-0 items-center pl-[8px]">
        {obsMenus.map(([t, w, s]) => <span key={t} className={t === "Perfil" ? "text-[#777]" : ""} style={{ width: s }}><Fit w={w}>{t}</Fit></span>)}
      </div>
      <div className="h-[460px] shrink-0 bg-[#4c4c4c] pt-[10px] pl-[292px]">
        <div className="relative h-[441px] w-[782px] overflow-hidden border-2 border-[#0080ff]">
          <div className="h-[900px] w-[1600px] origin-top-left scale-[0.486]"><Desktop mini /></div>
          <svg width="17" height="22" viewBox="0 0 17 22" className="absolute top-[133px] left-[701px]"><path d="M1 1v15l3.500-3 2.800 6.200 2.700-1.200-2.700-5.800H12z" fill="#fff" stroke="#111" /></svg>
        </div>
      </div>
      <div className="flex h-[34px] shrink-0 items-center pl-[5px] text-[11px]">
        <Fit w={133}>Nenhuma fonte selecionada</Fit>
        <div className="ml-[62px] flex h-[22px] items-center text-[#7b7b7b]">
          <span className="h-[22px] w-[3px] border border-[#222]" />
          <span className="ml-[6px] flex h-[22px] w-[89px] items-center rounded-[4px] bg-[#303030] pl-[3px]"><ObsGear s={16} /><Fit w={64} className="ml-px">Propriedades</Fit></span>
          <span className="ml-[6px] flex h-[22px] w-[55px] items-center rounded-[4px] bg-[#303030] pl-[3px]"><Svg s={16}><circle cx="6" cy="6" r="5.500" fill="#d2d2d2" /><path d="m3 5 2 5M6 3l2 6" stroke="#555" /><circle cx="10" cy="10" r="4.800" stroke="#d2d2d2" strokeWidth="1.500" strokeDasharray="1.500 1.500" /></Svg><Fit w={29} className="ml-px">Filtros</Fit></span>
          <span className="ml-[6px] h-[22px] w-[3px] border border-[#222]" />
        </div>
      </div>
      <div className="flex h-[165px] shrink-0 gap-[4px] text-[11px]">
        <Dock title="Cenas" w={32} className="w-[237px] bg-[#1f1e1f]">
          <div className="mx-px mt-px flex h-[17px] items-center bg-[#313031] pl-[3px] text-white"><Fit w={27}>Cena</Fit></div>
          <div className="flex-1" /><DockTools />
          <div className="h-px" />
        </Dock>
        <Dock title="Fontes" w={35} className="w-[238px] bg-[#1f1e1f]">
          <div className="flex h-[20px] items-center pl-[4px]">
            <Svg s={17}><path d="M1 2h14v10H1z" stroke="#d2d2d2" strokeWidth="1.500" /><path d="M4 14.500h8" stroke="#d2d2d2" strokeWidth="2" /></Svg><Fit w={25} className="ml-[7px]">teste</Fit><span className="flex-1" />
            <Svg s={16}><path d="M0 8c4-7 12-7 16 0-4 7-12 7-16 0" fill="#d2d2d2" /><circle cx="8" cy="8" r="3.500" fill="#1f1e1f" /><circle cx="8" cy="8" r="1.700" fill="#d2d2d2" /></Svg>
            <Svg s={15} className="mr-[2px] ml-[7px]"><path d="M2 7h12v8.500H2z" fill="#8a8a8a" /><path d="M5.500 4c0-4 6.500-4 6.500 0v3" stroke="#8a8a8a" strokeWidth="1.800" /></Svg>
          </div>
          <div className="flex-1" /><DockTools gear />
          <div className="h-px" />
        </Dock>
        <Dock title="Mixer de áudio" w={78} className="w-[479px] bg-[#1f1e1f]">
          <div className="flex flex-1 justify-between pr-[3px]">
            <div className="flex flex-col"><Channel name="Áudio do desktop" w={71} /><Channel name="Mic/Aux" w={33} live /></div>
            <div className="my-[3px] w-[10px] rounded-full bg-[#4c4c4c]" />
          </div>
        </Dock>
        <Dock title="Transições de cena" w={98} className="w-[195px]">
          <div className="mt-[5px] flex h-[20px] items-center pl-[4px]">
            <div className="flex h-[20px] w-[161px] items-center rounded-[3px] bg-[#4c4c4c] pl-[9px]"><Fit w={46}>Esmaecer</Fit><span className="flex-1" /><span className="flex h-full w-[21px] items-center justify-center border-l border-[#333]"><Svg s={13}><path d="m4 5 4-4 4 4M4 11l4 4 4-4" stroke="#d2d2d2" strokeWidth="1.300" /></Svg></span></div>
            <div className="ml-[4px] flex h-[21px] w-[22px] items-center justify-center rounded-[3px] bg-[#303030]"><ObsGear s={18} /></div>
          </div>
          <div className="mt-[3px] flex h-[21px] items-center pl-[3px]">
            <Fit w={41}>Duração</Fit>
            <div className="ml-[4px] flex h-[21px] w-[143px] items-center justify-between rounded-[3px] bg-[#1f1e1f] pl-[9px]"><Fit w={34} className="text-[10.5px]">300 ms</Fit>
              <div className="flex flex-col gap-px">{["m2 12 6-8 6 8", "m2 4 6 8 6-8"].map(d => <span key={d} className="flex h-[10px] w-[16px] items-center justify-center rounded-[2px] bg-[#4c4c4c]"><Svg s={10}><path d={d} stroke="#d2d2d2" strokeWidth="2.500" /></Svg></span>)}</div>
            </div>
          </div>
        </Dock>
        <Dock title="Controles" w={51} className="w-[201px]">
          <div className="flex flex-col gap-[2px] pt-[4px] pr-[4px] pl-[4px]">
            <CBtn t="Iniciar transmissão" w={89} />
            <div className="flex h-[21px] gap-[3px]"><div className="flex flex-1 items-center justify-center rounded-[3px] bg-[#1f1e1f]"><Fit w={107}>Interromper gravação</Fit></div><div className="flex w-[21px] items-center justify-center gap-[3px] rounded-[3px] bg-[#4c4c4c]"><span className="h-[12px] w-[4px] bg-[#d2d2d2]" /><span className="h-[12px] w-[4px] bg-[#d2d2d2]" /></div></div>
            <CBtn t="Iniciar câmera virtual" w={100} /><CBtn t="Modo estúdio" w={65} /><CBtn t="Configurações" w={69} /><CBtn t="Encerrar OBS" w={65} />
          </div>
        </Dock>
      </div>
      <div className="flex h-[25px] shrink-0 items-center pt-[3px] pl-[927px] text-[11px]">
        <Svg s={19} v={20}><circle cx="10" cy="10" r="3.800" fill="#8f8f8f" /><path d="M5.500 4.500c-3 3-3 8 0 11M14.500 4.500c3 3 3 8 0 11M2.500 2c-3.500 4.500-3.500 11.500 0 16M17.500 2c3.500 4.500 3.500 11.500 0 16" stroke="#8f8f8f" strokeWidth="1.200" /></Svg>
        <Fit w={72} className="ml-[6px]">LIVE: 00:00:00</Fit><span className="ml-[12px] h-[10px] w-[10px] rounded-full bg-[#d20000]" /><Fit w={72} className="ml-[10px]">REC: 00:00:47</Fit><Fit w={107} className="ml-[75px]">CPU: 4.3%, 30.00 fps</Fit>
      </div>
      <Taskbar tray={false} />
      <div className="absolute top-[24px] right-[9px] flex h-[41px] w-[103px] items-center border border-[#72849c] bg-[#202531] pl-[3px]">
        <span className="border-2 border-[#12303f]"><Badge s={28} /></span>
        <span className="ml-[5px] h-[35px] w-px bg-[#72849c]" />
        <span className="ml-[9px] flex gap-[3px]"><span className="h-[16px] w-[7px] bg-[#00aeff]" /><span className="h-[16px] w-[7px] bg-[#00aeff]" /></span>
        <span className="ml-[9px] h-[16px] w-[16px] bg-[#00aeff]" />
      </div>
      <div className="absolute top-[68px] right-[9px] flex h-[39px] w-[159px] flex-col border border-[#72849c] bg-[#202531] px-[3px] pt-[3px] text-[11px] text-white">
        <div className="flex h-[15px] items-center justify-end border-b border-[#72849c] pr-[3px]"><Fit w={54}>Stopping...</Fit></div>
        <div className="flex h-[15px] items-center justify-end pr-[3px]"><Fit w={144} className="text-[10.5px]">RH | Adiantantamento Salarial</Fit></div>
        <svg width="9" height="9" viewBox="0 0 9 9" className="absolute -top-[8px] right-[3px]" fill="#202531"><path d="M0 8.500 7.500.5v8" stroke="#72849c" /></svg>
      </div>
    </div>
  );
}

export default function App() {
  return (
    <div className="flex h-[900px] w-[2966px] items-start overflow-hidden bg-black">
      <Desktop />
      <Obs />
    </div>
  );
}
